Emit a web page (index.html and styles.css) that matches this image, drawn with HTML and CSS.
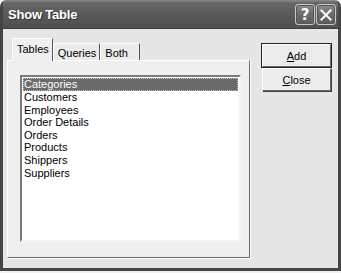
FILE: index.html
```html
<!DOCTYPE html>
<html lang="en">
<head>
    <meta charset="UTF-8">
    <title>Show Table</title>
    <link rel="stylesheet" href="styles.css">
</head>
<body>
    <div class="window">
        <div class="titlebar">
            <span class="title">Show Table</span>
            <div class="caption-buttons">
                <button class="cap-btn">?</button>
                <button class="cap-btn">
                    <svg width="12" height="12" viewBox="0 0 12 12"><path d="M1.5 1.5 L10.5 10.5 M10.5 1.5 L1.5 10.5" stroke="#fff" stroke-width="2" stroke-linecap="square"/></svg>
                </button>
            </div>
        </div>

        <div class="client">
            <div class="tabs-area">
                <div class="tab-strip">
                    <div class="tab active">Tables</div>
                    <div class="tab">Queries</div>
                    <div class="tab">Both</div>
                </div>
                <div class="tab-panel">
                    <ul class="listbox">
                        <li class="selected">Categories</li>
                        <li>Customers</li>
                        <li>Employees</li>
                        <li>Order Details</li>
                        <li>Orders</li>
                        <li>Products</li>
                        <li>Shippers</li>
                        <li>Suppliers</li>
                    </ul>
                </div>
            </div>

            <div class="actions">
                <button class="btn default"><u>A</u>dd</button>
                <button class="btn"><u>C</u>lose</button>
            </div>
        </div>
    </div>
</body>
</html>
```

FILE: styles.css
```css
body { margin: 0; padding: 0; background-color: #f2f2f2; font-family: "Liberation Sans", Arial, sans-serif; font-size: 11px; color: #000; }
.window { width: 341px; height: 271px; box-sizing: border-box; border: 3px solid #454545; border-top: none; border-radius: 7px 7px 0 0; background-color: #e6e6e6; overflow: hidden; display: flex; flex-direction: column; }
.titlebar { height: 29px; flex-shrink: 0; display: flex; align-items: center; justify-content: space-between; padding: 0 2px 0 5px; background: linear-gradient(to bottom, #8a8a8a 0, #666 3px, #585858 60%, #505050 100%); border-bottom: 1px solid #3c3c3c; box-sizing: border-box; }
.title { color: #fff; font-size: 13px; font-weight: bold; letter-spacing: -0.2px; text-shadow: 1px 1px 0 #333; margin-top: 1px; }
.caption-buttons { display: flex; gap: 1px; margin-top: 1px; }
.cap-btn { width: 20px; height: 21px; padding: 0; border: 1px solid #c8c8c8; border-radius: 3px; background: linear-gradient(to bottom, #8c8c8c 0, #6a6a6a 50%, #5e5e5e 100%); color: #fff; font-family: "DejaVu Sans", sans-serif; font-size: 15px; font-weight: bold; line-height: 18px; display: flex; align-items: center; justify-content: center; box-shadow: inset 0 0 0 1px #555; }
.client { display: flex; padding: 9px 0 0 4px; }
.tabs-area { width: 243px; display: flex; flex-direction: column; }
.tab-strip { display: flex; align-items: flex-end; height: 22px; padding-left: 5px; }
.tab { height: 17px; min-width: 40px; box-sizing: border-box; padding: 2px 3px 0 4px; border: 1px solid #fff; border-bottom: none; border-right: 1px solid #555; background-color: #ebebeb; line-height: 14px; }
.tab.active { height: 23px; margin-bottom: -1px; padding-top: 3px; position: relative; z-index: 1; background-color: #efefef; }
.tab-panel { height: 198px; box-sizing: border-box; padding: 14px 7px 0 12px; background-color: #efefef; border: 1px solid #fff; border-right: 1px solid #707070; border-bottom: 1px solid #707070; box-shadow: 1px 1px 0 #fafafa; }
.listbox { list-style: none; margin: 0; width: 221px; height: 167px; box-sizing: border-box; padding: 1px 1px; background-color: #fff; border: 2px solid #7a7a7a; border-right-color: #f4f4f4; border-bottom-color: #f4f4f4; }
.listbox li { height: 12.6px; line-height: 12.6px; padding-left: 1px; white-space: nowrap; }
.listbox li.selected { height: 13px; background-color: #6a6a6a; color: #fff; outline: 1px dotted #bbb; outline-offset: -1px; }
.actions { display: flex; flex-direction: column; gap: 1px; margin: 6px 0 0 12px; }
.btn { width: 69px; height: 23px; padding: 0; font-family: "Liberation Sans", Arial, sans-serif; font-size: 11px; color: #000; background-color: #ececec; border: 1px solid #fff; border-right-color: #6a6a6a; border-bottom-color: #6a6a6a; box-shadow: 1px 1px 0 #404040; }
.btn.default { outline: 1px solid #222; border-color: #fff #6a6a6a #6a6a6a #fff; }
```
